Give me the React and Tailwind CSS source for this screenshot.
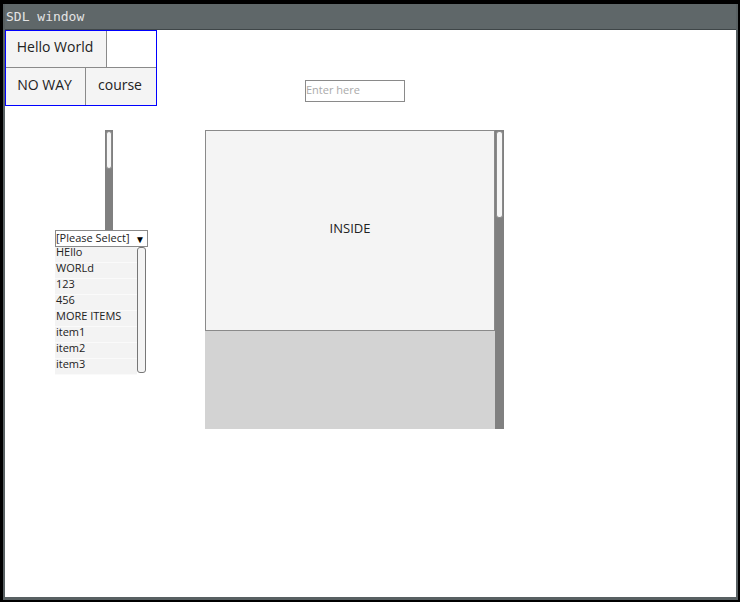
import React from "react";

const items = ["HEllo", "WORLd", "123", "456", "MORE ITEMS", "item1", "item2", "item3"];

export default function App() {
  const sans = { fontFamily: '"Open Sans", "Noto Sans", sans-serif' };
  return (
    <div className="w-[740px] h-[602px] bg-black overflow-hidden" style={sans}>
      <div className="ml-[3px] mt-[4px] w-[735px] h-[596px] bg-[#586062] flex flex-col px-[2px] pb-[3px]">
        <div
          className="h-[25px] bg-[#5f6769] -mx-[2px] px-px flex items-center text-[13px] text-[#e4e4e4] border-l-2 border-r-2 border-[#586062]"
          style={{ fontFamily: '"DejaVu Sans Mono", monospace' }}
        >
          SDL window
        </div>
        <div className="h-px bg-[#3f4648]" />
        <div className="flex-1 bg-white flex flex-col">
          {/* Row 1 */}
          <div className="h-[100px] flex items-start">
            <div className="w-[152px] h-[76px] border border-[#0000ff] flex flex-col text-[14px] text-[#222]">
              <div className="h-[37px] flex">
                <div className="w-[101px] bg-[#f4f4f4] border-r border-b border-[#8a8a8a] flex items-center justify-center pb-[5px] pr-[2px]">
                  Hello World
                </div>
                <div className="flex-1 border-b border-[#8a8a8a]" />
              </div>
              <div className="flex-1 flex">
                <div className="w-[80px] bg-[#f4f4f4] border-r border-[#8a8a8a] flex items-center justify-center pb-[4px] pr-[2px]">
                  NO WAY
                </div>
                <div className="flex-1 bg-[#f4f4f4] flex items-center justify-center pb-[4px] pr-[2px]">course</div>
              </div>
            </div>
            <div className="ml-[148px] mt-[50px] w-[100px] h-[22px] border border-[#8a8a8a] bg-white flex items-center px-0 pb-[2px] text-[11px] text-[#aaaaaa]">
              Enter here
            </div>
          </div>
          {/* Row 2 */}
          <div className="flex items-start">
            <div className="ml-[50px] w-[93px] flex flex-col">
              <div className="ml-[50px] w-[8px] h-[100px] bg-[#808080] pt-px px-px">
                <div className="h-[38px] bg-[#f6f6f6] border border-[#8a8a8a] rounded-[3px]" />
              </div>
              <div className="h-[17px] border border-[#8a8a8a] bg-white flex items-center justify-between pl-0 pr-[2px] pb-px text-[11px] text-[#222]">
                <span>[Please Select]</span>
                <span className="text-[10px] leading-none text-black pt-[2px]">▼</span>
              </div>
              <div className="flex h-[126px]">
                <div className="w-[82px] flex flex-col">
                  {items.map((it) => (
                    <div
                      key={it}
                      className="h-[16px] shrink-0 bg-[#f3f3f3] border-b border-[#fafafa] text-[11px] leading-[10px] pl-px text-[#222]"
                    >
                      {it}
                    </div>
                  ))}
                </div>
                <div className="w-[9px] h-[126px] bg-[#f4f4f4] border border-[#777] rounded-[3px]" />
              </div>
            </div>
            <div className="ml-[57px] w-[299px] h-[299px] flex">
              <div className="w-[290px] flex flex-col">
                <div className="h-[201px] bg-[#f4f4f4] border border-[#8a8a8a] flex items-center justify-center text-[13px] text-[#222] pb-[3px]">
                  INSIDE
                </div>
                <div className="flex-1 bg-[#d3d3d3]" />
              </div>
              <div className="w-[9px] bg-[#808080] pt-px px-px">
                <div className="h-[87px] bg-[#f6f6f6] border border-[#8a8a8a] rounded-[3px]" />
              </div>
            </div>
          </div>
        </div>
      </div>
    </div>
  );
}
